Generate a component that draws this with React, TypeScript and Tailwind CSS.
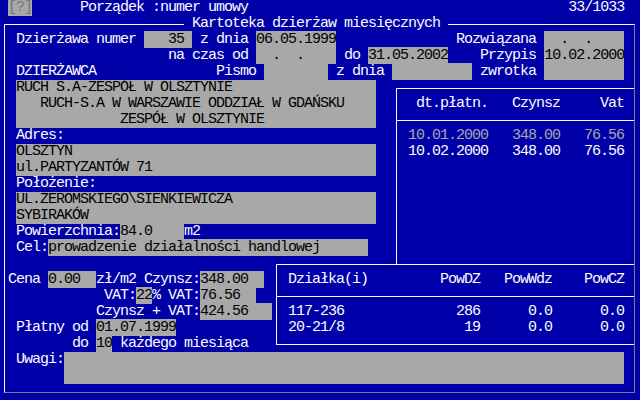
import type { ReactNode } from "react"

function F({ children }: { children: ReactNode }) {
	return <span className="bg-[#a8a8a8] text-black">{children}</span>
}

function Row({ children }: { children?: ReactNode }) {
	return <div className="h-4">{children}</div>
}

export default function App() {
	return (
		<div className="w-[640px] h-[400px] overflow-hidden bg-[#0000a8] text-[#fcfcfc] whitespace-pre font-['Liberation_Mono',monospace] text-[15px] leading-4 tracking-[-1px]">
			<Row>
				{" "}
				<span className="bg-[#a8a8a8] text-[#767676]">[?]</span>
				{"      Porządek :numer umowy                                        33/1033"}
			</Row>

			<div className="mt-2 ml-[4px] w-[631px] h-[369px] pl-[3px] border border-t-[#fcfcfc] border-l-[#fcfcfc] border-r-[#7c7c7c] border-b-[#7c7c7c]">
				<div className="-mt-[9px] h-4 flex">
					<span className="ml-[176px] bg-[#0000a8]">{" Kartoteka dzierżaw miesięcznych "}</span>
				</div>

				<Row>
					{" Dzierżawa numer "}
					<F>{"   35 "}</F>
					{" z dnia "}
					<F>{"06.05.1999"}</F>
					{"               Rozwiązana "}
					<F>{"  .  .    "}</F>
				</Row>
				<Row>
					{"                    na czas od "}
					<F>{"  .  .    "}</F>
					{" do "}
					<F>{"31.05.2002"}</F>
					{"    Przypis "}
					<F>{"10.02.2000"}</F>
				</Row>
				<Row>
					{" DZIERŻAWCA               Pismo "}
					<F>{"        "}</F>
					{" z dnia "}
					<F>{"          "}</F>
					{" zwrotka "}
					<F>{"          "}</F>
				</Row>

				<div className="flex items-start">
					<div className="w-[388px] shrink-0">
						<div className="ml-2 w-[360px] bg-[#a8a8a8] text-black">
							<Row>{"RUCH S.A-ZESPÓŁ W OLSZTYNIE"}</Row>
							<Row>{"   RUCH-S.A W WARSZAWIE ODDZIAŁ W GDAŃSKU"}</Row>
							<Row>{"             ZESPÓŁ W OLSZTYNIE"}</Row>
						</div>
						<Row>{" Adres:"}</Row>
						<div className="ml-2 w-[360px] bg-[#a8a8a8] text-black">
							<Row>{"OLSZTYN"}</Row>
							<Row>{"ul.PARTYZANTÓW 71"}</Row>
						</div>
						<Row>{" Położenie:"}</Row>
						<div className="ml-2 w-[360px] bg-[#a8a8a8] text-black">
							<Row>{"UL.ŻEROMSKIEGO\\SIENKIEWICZA"}</Row>
							<Row>{"SYBIRAKÓW"}</Row>
						</div>
						<Row>
							{" Powierzchnia:"}
							<F>{"84.0    "}</F>
							{"m2"}
						</Row>
						<Row>
							{" Cel:"}
							<F>{"prowadzenie działalności handlowej      "}</F>
						</Row>
					</div>

					<div className="flex-1 mt-2 h-[176px] border-l border-t border-[#fcfcfc] pt-[7px]">
						<div className="pl-[11px]">
							<Row>{" dt.płatn.   Czynsz     Vat"}</Row>
						</div>
						<div className="mt-2 border-t border-[#fcfcfc] pt-[7px] pl-[11px]">
							<div className="h-4 text-[#a8a8a8]">{"10.01.2000   348.00   76.56"}</div>
							<Row>{"10.02.2000   348.00   76.56"}</Row>
						</div>
					</div>
				</div>

				<div className="flex items-start">
					<div className="w-[268px] shrink-0 pt-2">
						<Row>
							{"Cena "}
							<F>{"0.00  "}</F>
							{"zł/m2 Czynsz:"}
							<F>{"348.00  "}</F>
						</Row>
						<Row>
							{"            VAT:"}
							<F>{"22"}</F>
							{"% VAT:"}
							<F>{"76.56  "}</F>
						</Row>
						<Row>
							{"           Czynsz + VAT:"}
							<F>{"424.56   "}</F>
						</Row>
						<Row>
							{" Płatny od "}
							<F>{"01.07.1999"}</F>
						</Row>
						<Row>
							{"        do "}
							<F>{"10"}</F>
							{" każdego miesiąca"}
						</Row>
					</div>

					<div className="flex-1 border-l border-t border-b border-[#fcfcfc] pt-[7px]">
						<div className="pl-[11px]">
							<Row>{"Działka(i)         PowDZ   PowWdz    PowCZ"}</Row>
						</div>
						<div className="mt-2 border-t border-[#fcfcfc] pt-[7px] pb-2 pl-[11px]">
							<Row>{"117-236              286      0.0      0.0"}</Row>
							<Row>{"20-21/8               19      0.0      0.0"}</Row>
						</div>
					</div>
				</div>

				<div className="flex items-start">
					<span className="h-4">{" Uwagi:"}</span>
					<div className="w-[560px] h-8 bg-[#a8a8a8]" />
				</div>
			</div>
		</div>
	)
}
